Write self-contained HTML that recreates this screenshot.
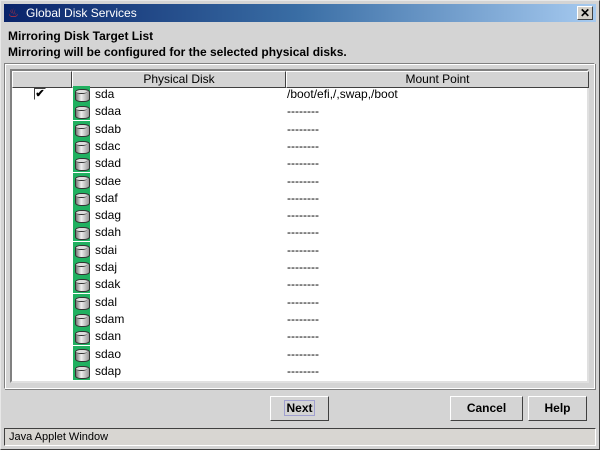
<!DOCTYPE html>
<html><head><style>
*{margin:0;padding:0;box-sizing:border-box}
body{width:600px;height:450px;overflow:hidden;background:#d4d4d4;font-family:"Liberation Sans",Arial,sans-serif;position:relative;font-size:12px}
.win{position:absolute;left:0;top:0;width:600px;height:450px;border:1px solid;border-color:#e8e8e8 #404040 #404040 #e8e8e8}
.title{position:absolute;left:4px;top:4px;width:592px;height:18px;background:linear-gradient(90deg,#0a246a,#3a6ea5 50%,#a6caf0);color:#fff;font-size:12px;line-height:18px;padding-left:22px}
.close{position:absolute;right:3px;top:2px;width:16px;height:14px;background:#d4d0c8;border:1px solid;border-color:#fff #404040 #404040 #fff;color:#000;font-size:12px;line-height:12px;text-align:center;font-weight:bold}
.h{position:absolute;left:8px;font-weight:bold;font-size:12px;color:#000}
.panel{position:absolute;left:4px;top:63px;width:591px;height:326px;border:1px solid;border-color:#808080 #fff #fff #808080;box-shadow:inset 1px 1px 0 #fff, 1px 1px 0 #808080}
.sp{position:absolute;left:10px;top:69px;width:579px;height:314px;background:#fff;border:2px solid;border-color:#808080 #e0e0e0 #e0e0e0 #808080}
.hdr{position:absolute;top:0;height:17px;background:#d4d4d4;border:1px solid;border-color:#fff #404040 #404040 #fff;text-align:center;font-size:12px;line-height:15px}
.row{position:absolute;left:0;height:17px;width:575px;font-size:12px;line-height:17px}
.ic{position:absolute;left:61px;top:0;width:17px;height:17px;background:#20b060}
.ic:before{content:"";position:absolute;left:2px;top:3px;width:13px;height:11px;border-radius:6px/3px;background:linear-gradient(90deg,#777,#eee 40%,#999);border:1px solid #333}
.ic:after{content:"";position:absolute;left:3px;top:4px;width:11px;height:3px;border-radius:50%;background:#ddd;border-bottom:1px solid #333}
.nm{position:absolute;left:83px;color:#000}
.mp{position:absolute;left:275px}
.cb{position:absolute;left:22px;top:2px;width:12px;height:12px;border:1px solid;border-color:#404040 #fff #fff #404040;font-size:11px;line-height:10px;text-align:center;font-weight:bold}
.btn{position:absolute;top:396px;height:25px;background:#d4d4d4;border:1px solid;border-color:#fff #404040 #404040 #fff;font-weight:bold;font-size:12px;text-align:center;line-height:23px}
.status{position:absolute;left:4px;top:428px;width:592px;height:18px;background:#d8d6d2;border:1px solid;border-color:#404040 #fff #fff #404040;font-size:11px;line-height:16px;padding-left:4px}
</style></head><body>
<div class="win"></div>
<div class="title"><span style="position:absolute;left:4px;top:0;color:#d33">♨</span>Global Disk Services<div class="close">✕</div></div>
<div class="h" style="top:29px">Mirroring Disk Target List</div>
<div class="h" style="top:45px">Mirroring will be configured for the selected physical disks.</div>
<div class="panel"></div>
<div class="sp">
<div class="hdr" style="left:0;width:60px"></div>
<div class="hdr" style="left:60px;width:214px">Physical Disk</div>
<div class="hdr" style="left:274px;width:303px">Mount Point</div>
<div id="rows"></div>
</div>
<div class="btn" style="left:270px;width:59px"><span style="border:1px solid #a0a0d0;padding:0 1px">Next</span></div>
<div class="btn" style="left:450px;width:73px">Cancel</div>
<div class="btn" style="left:528px;width:59px">Help</div>
<div class="status">Java Applet Window</div>
<script>
var n=["sda","sdaa","sdab","sdac","sdad","sdae","sdaf","sdag","sdah","sdai","sdaj","sdak","sdal","sdam","sdan","sdao","sdap"],h="";
n.forEach(function(s,i){h+='<div class="row" style="top:'+Math.round(15+i*17.3)+'px">'+(i==0?'<div class="cb">✔</div>':'')+'<div class="ic"></div><span class="nm">'+s+'</span><span class="mp">'+(i==0?'/boot/efi,/,swap,/boot':'--------')+'</span></div>'});
document.getElementById("rows").innerHTML=h;
</script>
</body></html>
